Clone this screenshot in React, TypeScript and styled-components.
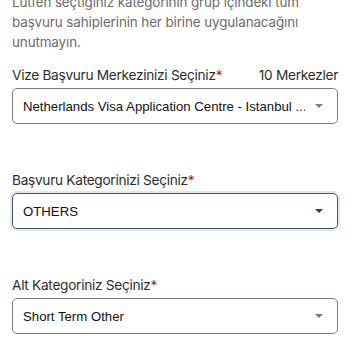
import React from 'react'
import styled, {createGlobalStyle} from 'styled-components'

const GlobalStyle = createGlobalStyle`
  html, body {
    margin: 0;
    padding: 0;
    background: #ffffff;
  }
  body {
    font-family: Inter, "Noto Sans", sans-serif;
    -webkit-font-smoothing: antialiased;
  }
`

interface Field {
  label: string
  value: string
  extra?: string
  focused?: boolean
}

const fields: Field[] = [
  {label: 'Vize Başvuru Merkezinizi Seçiniz', value: 'Netherlands Visa Application Centre - Istanbul ...', extra: '10 Merkezler'},
  {label: 'Başvuru Kategorinizi Seçiniz', value: 'OTHERS', focused: true},
  {label: 'Alt Kategoriniz Seçiniz', value: 'Short Term Other'},
]

const App: React.FC = () => {
  return (
    <Page>
      <GlobalStyle />
      <Note>
        Lütfen seçtiğiniz kategorinin grup içindeki tüm
        <br />
        başvuru sahiplerinin her birine uygulanacağını
        <br />
        unutmayın.
      </Note>
      <Form>
        {fields.map(f => (
          <Group key={f.label}>
            <LabelRow>
              <Label>
                {f.label}
                <Star>*</Star>
              </Label>
              {f.extra && <Extra>{f.extra}</Extra>}
            </LabelRow>
            <Select focused={f.focused}>
              <Value>{f.value}</Value>
              <Caret focused={f.focused} />
            </Select>
          </Group>
        ))}
      </Form>
    </Page>
  )
}

export default App

const Page = styled('div')`
  width: 350px;
  height: 350px;
  overflow: hidden;
  padding: 0 12px;
  box-sizing: border-box;
`

const Note = styled('p')`
  margin: -9px 0 0;
  padding-top: 1px;
  font-size: 13.4px;
  letter-spacing: -0.1px;
  line-height: 20px;
  color: #6b6b6b;
  white-space: nowrap;
`

const Form = styled('div')`
  display: flex;
  flex-direction: column;
  gap: 46px;
  margin-top: 13px;
`

const Group = styled('div')`
  display: flex;
  flex-direction: column;
  gap: 3px;
`

const LabelRow = styled('div')`
  display: flex;
  justify-content: space-between;
  align-items: center;
  height: 20px;
  white-space: nowrap;
`

const Label = styled('span')`
  font-size: 13.7px;
  letter-spacing: -0.3px;
  color: #2e2e2e;
`

const Star = styled('span')`
  color: #a8173a;
`

const Extra = styled('span')`
  font-size: 13.7px;
  letter-spacing: -0.3px;
  color: #2e2e2e;
`

const Select = styled('div')<{focused?: boolean}>`
  height: 36px;
  box-sizing: border-box;
  border: 1px solid ${p => (p.focused ? '#4a5664' : '#75808c')};
  border-radius: 5px;
  display: flex;
  align-items: center;
  justify-content: space-between;
  gap: 10px;
  padding: 0 14px 0 10px;
  box-shadow: ${p => (p.focused ? '0 0 0 2px rgba(160, 190, 220, 0.35)' : 'none')};
`

const Value = styled('span')`
  font-family: "Liberation Sans", Arial, sans-serif;
  font-size: 13.2px;
  color: #111;
  white-space: nowrap;
  overflow: hidden;
`

const Caret = styled('span')<{focused?: boolean}>`
  width: 0;
  height: 0;
  border-left: 4px solid transparent;
  border-right: 4px solid transparent;
  border-top: 4px solid ${p => (p.focused ? '#2c3a6e' : '#7a7a7a')};
  flex-shrink: 0;
`
